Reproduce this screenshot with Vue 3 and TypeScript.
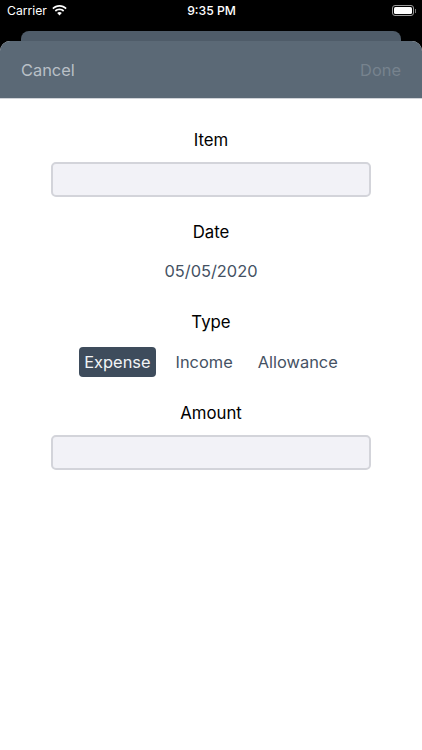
<script setup lang="ts">
const types: string[] = ['Expense', 'Income', 'Allowance']
</script>

<template>
  <div class="screen">
    <div class="status">
      <div class="left">
        <span>Carrier</span>
        <svg class="wifi" width="15" height="11" viewBox="0 0 15 11">
          <path d="M7.5 0C4.7 0 2.2 1.1.3 2.9l1.2 1.3C3 2.7 5.1 1.8 7.5 1.8s4.500.9 6 2.4l1.2-1.3C12.800 1.100 10.300 0 7.500 0z" fill="#fff"/>
          <path d="M7.500 3.500c-1.800 0-3.500.7-4.700 1.900L4 6.700c.9-.9 2.100-1.400 3.500-1.400s2.600.5 3.500 1.400l1.200-1.300C11 4.200 9.300 3.500 7.500 3.500z" fill="#fff"/>
          <path d="M7.500 7c-.9 0-1.700.35-2.300.95L7.500 10.600l2.300-2.650C9.200 7.350 8.400 7 7.500 7z" fill="#fff"/>
        </svg>
      </div>
      <span class="time">9:35 PM</span>
      <div class="battery-wrap">
        <div class="battery"><i class="level"></i></div>
        <i class="nub"></i>
      </div>
    </div>
    <div class="back-sheet"></div>
    <div class="sheet">
      <div class="nav">
        <span class="cancel">Cancel</span>
        <span class="done">Done</span>
      </div>
      <form class="form" @submit.prevent>
        <label class="label">Item</label>
        <input class="field" type="text" />
        <label class="label date-label">Date</label>
        <div class="date">05/05/2020</div>
        <label class="label type-label">Type</label>
        <div class="types">
          <span v-for="(t, i) in types" :key="t" class="type" :class="{ active: i === 0 }">{{ t }}</span>
        </div>
        <label class="label amount-label">Amount</label>
        <input class="field" type="text" />
      </form>
    </div>
  </div>
</template>

<style>
html, body { margin: 0; background: #000; }
</style>

<style scoped>
.screen {
  width: 422px;
  height: 750px;
  background: #000;
  display: flex;
  flex-direction: column;
  overflow: hidden;
  font-family: Inter, "Liberation Sans", sans-serif;
}
.status {
  height: 20px;
  box-sizing: border-box;
  padding: 1px 6px 0 7px;
  display: grid;
  grid-template-columns: 1fr auto 1fr;
  align-items: center;
  color: #fff;
  font-size: 12.2px;
  flex: none;
}
.left { display: flex; align-items: center; gap: 5px; }
.wifi { margin-top: -1px; }
.time { font-weight: 500; }
.battery-wrap {
  justify-self: end;
  display: flex;
  align-items: center;
  gap: 1px;
}
.battery {
  width: 22px;
  height: 11px;
  border: 1px solid #9a9a9a;
  border-radius: 3px;
  padding: 1px;
  box-sizing: border-box;
  display: flex;
}
.level { flex: 1; background: #fff; border-radius: 1.5px; }
.nub { width: 1px; height: 4px; background: #777; }
.back-sheet {
  height: 10px;
  margin: 11px 21px 0;
  background: #4f5c69;
  border-radius: 8px 8px 0 0;
  flex: none;
}
.sheet {
  flex: 1;
  background: #fff;
  border-radius: 10px 10px 0 0;
  overflow: hidden;
  display: flex;
  flex-direction: column;
}
.nav {
  height: 58px;
  box-sizing: border-box;
  background: #5b6976;
  border-bottom: 1px solid #d0d3d8;
  padding: 0 21px;
  display: flex;
  justify-content: space-between;
  align-items: center;
  font-size: 16.4px;
  flex: none;
}
.cancel { color: #b9c0c7; }
.done { color: #77838e; }
.form {
  display: flex;
  flex-direction: column;
  align-items: center;
  padding-top: 30px;
}
.label {
  font-size: 16.8px;
  line-height: 22px;
  color: #000;
}
.field {
  width: 320px;
  height: 35px;
  margin: 11px 0 0;
  box-sizing: border-box;
  background: #f2f2f7;
  border: 2px solid #d3d4da;
  border-radius: 5px;
  outline: none;
  padding: 0;
}
.date-label { margin-top: 24px; }
.date {
  margin-top: 17px;
  font-size: 16.4px;
  line-height: 22px;
  color: #445163;
}
.type-label { margin-top: 29px; }
.types {
  margin-top: 14px;
  display: flex;
  gap: 15px;
}
.type {
  padding: 0 5px;
  height: 30px;
  line-height: 30px;
  border-radius: 4px;
  font-size: 16.4px;
  color: #445163;
}
.active { background: #3e4c5c; color: #f2f4f6; }
.amount-label { margin-top: 25px; }
</style>
